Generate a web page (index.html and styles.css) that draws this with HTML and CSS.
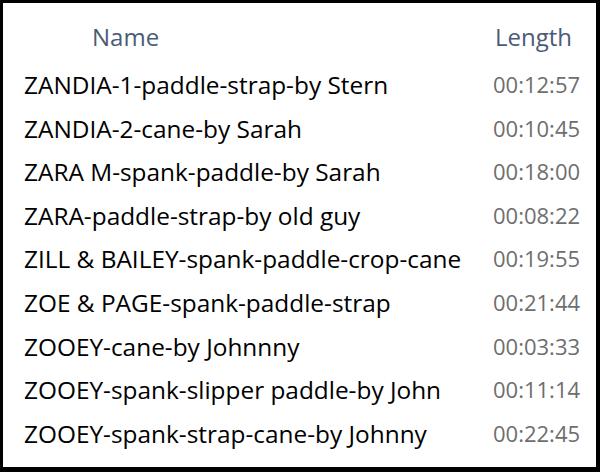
FILE: index.html
```html
<!DOCTYPE html>
<html>
<head>
<meta charset="utf-8">
<link rel="stylesheet" href="styles.css">
</head>
<body>
<div class="frame">
  <div class="list">
    <div class="head">
      <div class="h-name">Name</div>
      <div class="h-len">Length</div>
    </div>
    <div class="row"><div class="name">ZANDIA-1-paddle-strap-by Stern</div><div class="len">00:12:57</div></div>
    <div class="row"><div class="name">ZANDIA-2-cane-by Sarah</div><div class="len">00:10:45</div></div>
    <div class="row"><div class="name">ZARA M-spank-paddle-by Sarah</div><div class="len">00:18:00</div></div>
    <div class="row"><div class="name">ZARA-paddle-strap-by old guy</div><div class="len">00:08:22</div></div>
    <div class="row"><div class="name">ZILL &amp; BAILEY-spank-paddle-crop-cane</div><div class="len">00:19:55</div></div>
    <div class="row"><div class="name">ZOE &amp; PAGE-spank-paddle-strap</div><div class="len">00:21:44</div></div>
    <div class="row"><div class="name">ZOOEY-cane-by Johnnny</div><div class="len">00:03:33</div></div>
    <div class="row"><div class="name">ZOOEY-spank-slipper paddle-by John</div><div class="len">00:11:14</div></div>
    <div class="row"><div class="name">ZOOEY-spank-strap-cane-by Johnny</div><div class="len">00:22:45</div></div>
  </div>
</div>
</body>
</html>
```
FILE: styles.css
```css
html, body {
  margin: 0;
  padding: 0;
  background: #000;
}
.frame {
  width: 600px;
  height: 472px;
  box-sizing: border-box;
  border-style: solid;
  border-color: #000;
  border-width: 3px 4px 5px 3px;
  background: #fff;
  font-family: "Open Sans", "Noto Sans", sans-serif;
  font-size: 24px;
  overflow: hidden;
}
.list {
  display: flex;
  flex-direction: column;
}
.head {
  display: grid;
  grid-template-columns: 1fr 103px;
  height: 60px;
  padding-top: 12px;
  box-sizing: border-box;
  line-height: 44px;
  color: #4b5b76;
}
.h-name {
  padding-left: 89px;
}
.h-len {
  padding-left: 2px;
}
.row {
  display: grid;
  grid-template-columns: 1fr 103px;
  height: 43.6px;
  line-height: 43.6px;
}
.name {
  padding-left: 21px;
  color: #000;
  font-size: 24.4px;
  white-space: nowrap;
}
.len {
  color: #6e6e6e;
  font-size: 22px;
  padding-left: 0;
}
```
